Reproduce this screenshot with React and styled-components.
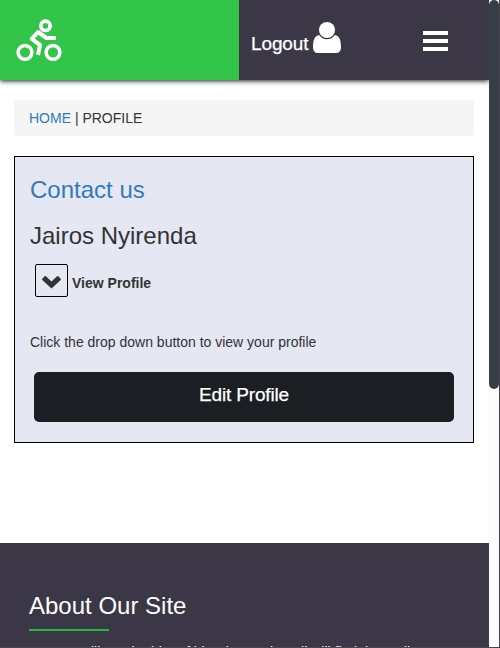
import React from 'react';
import styled, { createGlobalStyle } from 'styled-components';

const GlobalStyle = createGlobalStyle`
  *, *::before, *::after { box-sizing: border-box; }
  html, body { margin: 0; padding: 0; overflow: hidden; background: #fff; }
  body { font: 14px/20px "Liberation Sans", Arial, sans-serif; color: #333; }
`;

const Window = styled.div`
  display: grid;
  grid-template-columns: 489px 10px 1px;
  width: 500px;
  height: 648px;
  overflow: hidden;
`;

const Page = styled.div`
  display: flex;
  flex-direction: column;
  height: 648px;
  min-width: 0;
  overflow: hidden;
  border-bottom: 1px solid #4b4550;
`;

const ScrollTrack = styled.div`
  background: #fcfcfc;
  border-bottom: 1px solid #4b4550;
`;

const ScrollThumb = styled.div`
  height: 389px;
  border-radius: 5px;
  background: #353d47;
`;

const WindowEdge = styled.div`
  background: #47434c;
`;

const Header = styled.header`
  display: flex;
  flex: none;
  height: 80px;
  background: #3b3747;
  color: #fff;
  box-shadow: 0 1px 5px rgba(0, 0, 0, 0.9);
`;

const Brand = styled.a`
  width: 239px;
  padding: 19px 0 0 16px;
  background: #33c54a;
  svg { display: block; }
`;

const Logout = styled.a`
  display: flex;
  width: 184px;
  padding: 22px 0 0 12px;
  font-size: 19px;
  line-height: 22px;
  letter-spacing: -0.12px;
  -webkit-text-stroke: 0.25px #fff;
  svg { display: block; margin-left: 4.5px; }
  span { margin-top: 11px; }
`;

const MenuButton = styled.div`
  display: flex;
  flex-direction: column;
  gap: 4px;
  width: 25px;
  padding-top: 31px;
`;

const MenuBar = styled.span`
  height: 4px;
  background: #fff;
`;

const Breadcrumb = styled.nav`
  flex: none;
  height: 36px;
  margin: 20px 15px 20px 14px;
  padding: 8px 15px;
  border-radius: 4px;
  background: #f5f5f5;
`;

const Link = styled.a`
  color: #337ab7;
`;

const Card = styled.main`
  flex: none;
  height: 287px;
  margin: 0 15px 0 14px;
  padding: 20px 19px 0 15px;
  border: 1px solid #000;
  background: #e5e7f3;
`;

const Heading = styled.h2`
  margin: 0 0 20px;
  font-size: 24px;
  font-weight: 400;
  line-height: 26px;
  color: ${(p) => p.$color || '#333'};
`;

const ProfileRow = styled.div`
  display: flex;
  align-items: center;
  gap: 4px;
  margin: -5px 0 0 5px;
  font-weight: 700;
`;

const DropButton = styled.button`
  display: flex;
  width: 33px;
  height: 33px;
  padding: 9px 0 0 6px;
  border: 1px solid #000;
  border-radius: 2px;
  background: transparent;
  color: #333;
`;

const RowLabel = styled.span`
  padding-top: 5px;
`;

const Hint = styled.p`
  margin: 35px 0 20px;
`;

const EditButton = styled.button`
  display: block;
  width: 420px;
  height: 50px;
  margin-left: 4px;
  padding: 0 0 5px;
  border: 0;
  border-radius: 5px;
  background: #1b1e22;
  color: #fff;
  font: 19px/22px "Liberation Sans", Arial, sans-serif;
  letter-spacing: -0.15px;
  -webkit-text-stroke: 0.25px #fff;
`;

const Footer = styled.footer`
  flex: none;
  height: 160px;
  margin-top: 100px;
  padding: 50px 29px 0;
  background: #3b3747;
  color: #fff;
`;

const FooterTitle = styled.h3`
  margin: 0;
  font-size: 24px;
  font-weight: 400;
  line-height: 26px;
`;

const Underline = styled.div`
  width: 80px;
  height: 2px;
  margin-top: 10px;
  background: #25b93a;
`;

const FooterText = styled.p`
  margin: 11px 0 0 20px;
  white-space: nowrap;
`;

const CyclistIcon = () => (
  <svg width="47" height="43" viewBox="0 0 47 43" fill="none" stroke="#fff">
    <circle cx="9" cy="33.3" r="6.9" strokeWidth="3.5" />
    <circle cx="37" cy="33.3" r="6.9" strokeWidth="3.5" />
    <circle cx="29.5" cy="6.8" r="4.7" strokeWidth="3.7" />
    <path d="M39.8 19H30.5L22 13L15.8 19.8L24 25.8L22 36" strokeWidth="4" strokeLinejoin="round" />
  </svg>
);

const UserIcon = () => (
  <svg width="28" height="31" viewBox="0 0 28 31" fill="#fff">
    <circle cx="14" cy="8" r="8" />
    <path d="M6.2 13A9.2 9.2 0 0 0 21.8 13C26.5 13.5 28 18.5 28 25.2C28 28.8 26 31 23 31H5C2 31 0 28.8 0 25.2C0 18.5 1.5 13.5 6.2 13Z" />
  </svg>
);

const ChevronIcon = () => (
  <svg width="20" height="16" viewBox="0 0 20 16" fill="currentColor">
    <path d="M9.5 14.5L.3 6Q-.2 5.3 .3 4.7L2.7 2.3Q3.3 1.8 3.9 2.3L9.5 7.5L15.1 2.3Q15.7 1.8 16.3 2.3L18.7 4.7Q19.2 5.3 18.7 6Z" />
  </svg>
);

export default function App() {
  return (
    <>
      <GlobalStyle />
      <Window>
        <Page>
          <Header>
            <Brand><CyclistIcon /></Brand>
            <Logout><span>Logout</span><UserIcon /></Logout>
            <MenuButton><MenuBar /><MenuBar /><MenuBar /></MenuButton>
          </Header>
          <Breadcrumb><Link>HOME</Link> | PROFILE</Breadcrumb>
          <Card>
            <Heading $color="#337ab7">Contact us</Heading>
            <Heading>Jairos Nyirenda</Heading>
            <ProfileRow>
              <DropButton aria-label="View Profile"><ChevronIcon /></DropButton>
              <RowLabel>View Profile</RowLabel>
            </ProfileRow>
            <Hint>Click the drop down button to view your profile</Hint>
            <EditButton>Edit Profile</EditButton>
          </Card>
          <Footer>
            <FooterTitle>About Our Site</FooterTitle>
            <Underline />
            <FooterText>To Facilitate the hire of bicycles so that all will find them all</FooterText>
          </Footer>
        </Page>
        <ScrollTrack><ScrollThumb /></ScrollTrack>
        <WindowEdge />
      </Window>
    </>
  );
}
